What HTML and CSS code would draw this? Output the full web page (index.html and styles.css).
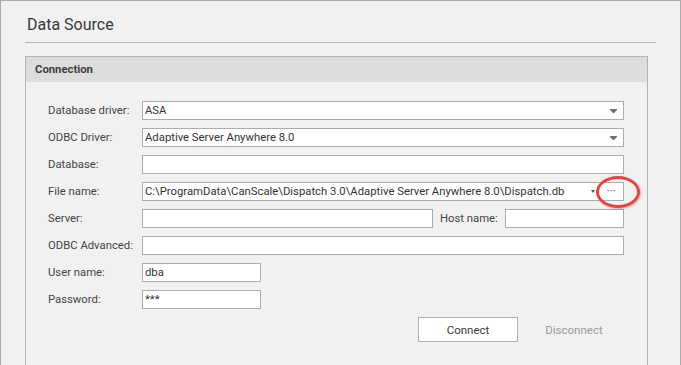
FILE: index.html
```html
<!DOCTYPE html>
<html>
<head>
    <title>Data Source</title>
    <link rel="stylesheet" href="styles.css">
</head>
<body>
    <div class="window">
        <h1 class="page-title">Data Source</h1>

        <div class="group">
            <div class="group-header">Connection</div>
            <div class="group-body">
                <div class="form-row">
                    <label>Database driver:</label>
                    <div class="field combo">
                        <span class="value">ASA</span>
                        <svg class="arrow" width="7" height="4" viewBox="0 0 7 4"><path d="M0 0h7v1L4 4H3L0 1z" fill="#707070"/></svg>
                    </div>
                </div>
                <div class="form-row">
                    <label>ODBC Driver:</label>
                    <div class="field combo">
                        <span class="value">Adaptive Server Anywhere 8.0</span>
                        <svg class="arrow" width="7" height="4" viewBox="0 0 7 4"><path d="M0 0h7v1L4 4H3L0 1z" fill="#707070"/></svg>
                    </div>
                </div>
                <div class="form-row">
                    <label>Database:</label>
                    <div class="field"></div>
                </div>
                <div class="form-row">
                    <label>File name:</label>
                    <div class="field file">
                        <span class="value">C:\ProgramData\CanScale\Dispatch 3.0\Adaptive Server Anywhere 8.0\Dispatch.db</span>
                        <svg class="mini-arrow" width="4" height="3" viewBox="0 0 4 3"><path d="M0 0h4L2 3z" fill="#555"/></svg>
                        <span class="browse">&middot;&middot;&middot;</span>
                        <span class="highlight"></span>
                    </div>
                </div>
                <div class="form-row">
                    <label>Server:</label>
                    <div class="field server"></div>
                    <label class="host-label">Host name:</label>
                    <div class="field"></div>
                </div>
                <div class="form-row">
                    <label>ODBC Advanced:</label>
                    <div class="field"></div>
                </div>
                <div class="form-row">
                    <label>User name:</label>
                    <div class="field short"><span class="value">dba</span></div>
                </div>
                <div class="form-row">
                    <label>Password:</label>
                    <div class="field short"><span class="value secret">***</span></div>
                </div>

                <div class="actions">
                    <button class="btn">Connect</button>
                    <button class="btn flat" disabled>Disconnect</button>
                </div>
            </div>
        </div>
    </div>
</body>
</html>
```

FILE: styles.css
```css
body {
    margin: 0;
    overflow: hidden;
    background: #f1f1f1;
    font-family: Roboto, "Noto Sans", sans-serif;
    font-size: 11.3px;
    color: #444;
}
.window {
    display: flex;
    flex-direction: column;
    height: 364px;
    border: 1px solid #acacac;
    border-bottom: none;
    padding: 0 24px;
    background: #f1f1f1;
}
.page-title {
    margin: 0 0 13px;
    padding: 12px 0 5px 2px;
    font-size: 16px;
    font-weight: normal;
    line-height: 24px;
    color: #3a3a3a;
    border-bottom: 1px solid #b3b3b3;
}
.group {
    flex: 1;
    margin-right: 8px;
    border: 1px solid #b4b4b4;
    border-bottom: none;
}
.group-header {
    height: 25px;
    line-height: 25px;
    padding-left: 9px;
    background: #dcdcdc;
    font-weight: bold;
    color: #3f3f3f;
}
.group-body {
    padding: 19px 23px 0 22px;
}
.form-row {
    display: flex;
    align-items: center;
    height: 19px;
    margin-bottom: 8px;
}
.form-row label {
    flex: none;
    width: 94px;
    line-height: 19px;
    white-space: nowrap;
}
.field {
    flex: 1;
    display: flex;
    align-items: center;
    height: 19px;
    box-sizing: border-box;
    border: 1px solid #acacac;
    background: #fff;
    padding-left: 2px;
    color: #333;
}
.field .value {
    flex: 1;
    white-space: nowrap;
    overflow: hidden;
}
.field.short {
    flex: none;
    width: 119px;
}
.field.server {
    flex: none;
    width: 291px;
}
.form-row .host-label {
    width: 65px;
    margin-left: 7px;
}
.arrow {
    margin-right: 6px;
}
.file {
    position: relative;
}
.mini-arrow {
    margin: 0 9px 0 4px;
}
.browse {
    width: 14px;
    margin-right: 5px;
    text-align: center;
    font-size: 11px;
    color: #444;
}
.highlight {
    position: absolute;
    left: 453px;
    top: -7px;
    width: 44px;
    height: 32px;
    box-sizing: border-box;
    border: 3px solid #e8413f;
    border-radius: 50%;
    box-shadow: 1px 1px 2px rgba(0, 0, 0, 0.25);
}
.secret {
    line-height: 12px;
}
.actions {
    display: flex;
    justify-content: flex-end;
    gap: 6px;
    margin-top: 7px;
}
.btn {
    width: 100px;
    height: 25px;
    border: 1px solid #adadad;
    background: #fff;
    font-family: inherit;
    font-size: 11.5px;
    color: #3a3a3a;
    padding: 0;
}
.btn.flat {
    border-color: transparent;
    background: transparent;
    color: #9a9a9a;
}
```
